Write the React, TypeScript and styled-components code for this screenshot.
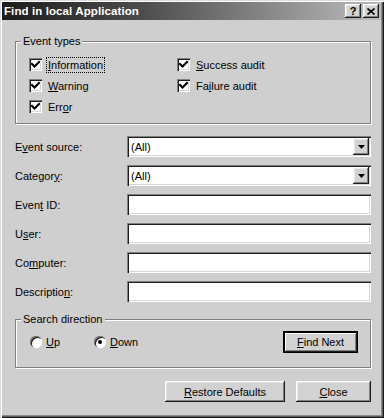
import * as React from 'react'
import styled, { createGlobalStyle } from 'styled-components'

const GlobalStyle = createGlobalStyle`
  html, body {
    margin: 0;
    padding: 0;
    background: #cfcfcf;
  }
  body {
    font-family: "Liberation Sans", Arial, sans-serif;
    font-size: 11px;
    color: #000;
  }
`

const raised = `
  background: #d2d2d2;
  box-shadow: inset -1px -1px 0 #1e1e1e, inset 1px 1px 0 #fff,
    inset -2px -2px 0 #808080, inset 2px 2px 0 #e6e6e6;
`

const sunken = `
  background: #fff;
  box-shadow: inset 1px 1px 0 #808080, inset 2px 2px 0 #1e1e1e,
    inset -1px -1px 0 #fff, inset -2px -2px 0 #d6d6d6;
`

const Window = styled.div`
  width: 384px;
  height: 418px;
  box-sizing: border-box;
  padding: 2px 3px 3px 2px;
  background: #cfcfcf;
  box-shadow: inset 1px 1px 0 #dcdcdc, inset 2px 2px 0 #fff,
    inset -1px -1px 0 #1a1a1a, inset -2px -2px 0 #5a5a5a, inset -3px -3px 0 #8a8a8a;
  display: flex;
  flex-direction: column;
`

const TitleBar = styled.div`
  height: 18px;
  display: flex;
  align-items: center;
  padding: 0 2px 0 2px;
  background: linear-gradient(to right, #1c1c1c 0%, #4a4a4a 35%, #bdbdbd 100%);
`

const Title = styled.div`
  flex: 1;
  color: #fff;
  font-weight: bold;
  font-size: 11.5px;
  letter-spacing: 0.1px;
`

const CaptionButtons = styled.div`
  display: flex;
  gap: 2px;
`

const CaptionButton = styled.div`
  ${raised}
  width: 16px;
  height: 14px;
  display: flex;
  align-items: center;
  justify-content: center;
  font-weight: bold;
  font-size: 11px;
  line-height: 14px;
`

const Body = styled.div`
  flex: 1;
  display: flex;
  flex-direction: column;
  padding: 15px 10px 0 13px;
`

const GroupBox = styled.fieldset`
  margin: 0;
  padding: 0;
  min-width: 0;
  border: 1px solid #808080;
  box-shadow: 1px 1px 0 #fff, inset 1px 1px 0 #fff;
`

const Legend = styled.legend`
  margin-left: 5px;
  padding: 0 2px;
  line-height: 13px;
  background: #cfcfcf;
`

const CheckGrid = styled.div`
  display: grid;
  grid-template-columns: 148px 1fr;
  grid-auto-rows: 21px;
  padding: 6px 0 6px 13px;
`

const CheckItem = styled.div`
  display: flex;
  align-items: center;
  gap: 5px;
`

const CheckBox = styled.span`
  ${sunken}
  width: 13px;
  height: 13px;
  display: flex;
  align-items: center;
  justify-content: center;
`

const Label = styled.span<{ $focus?: boolean }>`
  padding: 1px 1px;
  line-height: 12px;
  outline: ${p => (p.$focus ? '1px dotted #000' : 'none')};
`

const Key = styled.span`
  text-decoration: underline;
`

const FieldGrid = styled.div`
  display: grid;
  grid-template-columns: 112px 1fr;
  grid-auto-rows: 21px;
  row-gap: 8px;
  margin-top: 12px;
  align-items: center;
`

const FieldBox = styled.div`
  ${sunken}
  height: 21px;
  box-sizing: border-box;
  display: flex;
  align-items: center;
  padding: 2px 2px 2px 4px;
`

const FieldText = styled.span`
  flex: 1;
`

const DropButton = styled.div`
  ${raised}
  width: 16px;
  height: 17px;
  display: flex;
  align-items: center;
  justify-content: center;
`

const SearchGroup = styled(GroupBox)`
  margin-top: 11px;
`

const DirectionRow = styled.div`
  display: flex;
  align-items: center;
  padding: 5px 12px 14px 14px;
`

const RadioItem = styled.div<{ $width?: number }>`
  display: flex;
  align-items: center;
  gap: 4px;
  width: ${p => (p.$width ? `${p.$width}px` : 'auto')};
`

const Radio = styled.span<{ $on?: boolean }>`
  width: 12px;
  height: 12px;
  border-radius: 50%;
  background: #fff;
  box-shadow: inset 1px 1px 0 #808080, inset 2px 2px 0 #1e1e1e,
    inset -1px -1px 0 #fff;
  display: flex;
  align-items: center;
  justify-content: center;

  &::after {
    content: '';
    width: 4px;
    height: 4px;
    border-radius: 50%;
    background: ${p => (p.$on ? '#000' : 'transparent')};
  }
`

const Button = styled.div<{ $width: number; $default?: boolean }>`
  ${raised}
  width: ${p => p.$width}px;
  height: ${p => (p.$default ? 22 : 21)}px;
  box-sizing: border-box;
  display: flex;
  align-items: center;
  justify-content: center;
  outline: ${p => (p.$default ? '1px solid #000' : 'none')};
  outline-offset: -1px;
  box-shadow: ${p =>
    p.$default
      ? 'inset -2px -2px 0 #1e1e1e, inset 2px 2px 0 #000, inset 3px 3px 0 #fff, inset -3px -3px 0 #808080'
      : 'inset -1px -1px 0 #1e1e1e, inset 1px 1px 0 #fff, inset -2px -2px 0 #808080, inset 2px 2px 0 #e6e6e6'};
`

const FindButton = styled(Button)`
  margin-left: auto;
`

const ButtonRow = styled.div`
  display: flex;
  justify-content: flex-end;
  gap: 11px;
  margin-top: 13px;
`

const Check = () => (
  <svg width="9" height="9" viewBox="0 0 9 9">
    <path d="M1 4 L3.5 6.5 L8 2" stroke="#000" strokeWidth="2" fill="none" strokeLinecap="square" />
  </svg>
)

const Arrow = () => (
  <svg width="7" height="4" viewBox="0 0 7 4">
    <polygon points="0,0 7,0 3.5,4" fill="#000" />
  </svg>
)

const CloseGlyph = () => (
  <svg width="8" height="7" viewBox="0 0 8 7">
    <path d="M0.5 0.5 L7.5 6.5 M7.5 0.5 L0.5 6.5" stroke="#000" strokeWidth="1.6" />
  </svg>
)

const checks: { pre: string; key: string; post: string; focus?: boolean }[] = [
  { pre: '', key: 'I', post: 'nformation', focus: true },
  { pre: '', key: 'S', post: 'uccess audit' },
  { pre: '', key: 'W', post: 'arning' },
  { pre: 'Fa', key: 'i', post: 'lure audit' },
  { pre: 'Err', key: 'o', post: 'r' },
]

const fields: { pre: string; key: string; post: string; select?: boolean }[] = [
  { pre: 'E', key: 'v', post: 'ent source:', select: true },
  { pre: 'Categor', key: 'y', post: ':', select: true },
  { pre: 'Even', key: 't', post: ' ID:' },
  { pre: 'U', key: 's', post: 'er:' },
  { pre: 'Co', key: 'm', post: 'puter:' },
  { pre: 'Descriptio', key: 'n', post: ':' },
]

const App = () => (
  <>
    <GlobalStyle />
    <Window>
      <TitleBar>
        <Title>Find in local Application</Title>
        <CaptionButtons>
          <CaptionButton>?</CaptionButton>
          <CaptionButton>
            <CloseGlyph />
          </CaptionButton>
        </CaptionButtons>
      </TitleBar>
      <Body>
        <GroupBox>
          <Legend>Event types</Legend>
          <CheckGrid>
            {checks.map(c => (
              <CheckItem key={c.pre + c.key + c.post}>
                <CheckBox>
                  <Check />
                </CheckBox>
                <Label $focus={c.focus}>
                  {c.pre}
                  <Key>{c.key}</Key>
                  {c.post}
                </Label>
              </CheckItem>
            ))}
          </CheckGrid>
        </GroupBox>

        <FieldGrid>
          {fields.map(f => (
            <React.Fragment key={f.pre + f.key}>
              <span>
                {f.pre}
                <Key>{f.key}</Key>
                {f.post}
              </span>
              <FieldBox>
                <FieldText>{f.select ? '(All)' : ''}</FieldText>
                {f.select && (
                  <DropButton>
                    <Arrow />
                  </DropButton>
                )}
              </FieldBox>
            </React.Fragment>
          ))}
        </FieldGrid>

        <SearchGroup>
          <Legend>Search direction</Legend>
          <DirectionRow>
            <RadioItem $width={64}>
              <Radio />
              <span>
                <Key>U</Key>p
              </span>
            </RadioItem>
            <RadioItem>
              <Radio $on />
              <span>
                <Key>D</Key>own
              </span>
            </RadioItem>
            <FindButton $width={75} $default>
              <span>
                <Key>F</Key>ind Next
              </span>
            </FindButton>
          </DirectionRow>
        </SearchGroup>

        <ButtonRow>
          <Button $width={120}>
            <span>
              <Key>R</Key>estore Defaults
            </span>
          </Button>
          <Button $width={75}>
            <span>
              <Key>C</Key>lose
            </span>
          </Button>
        </ButtonRow>
      </Body>
    </Window>
  </>
)

export default App
